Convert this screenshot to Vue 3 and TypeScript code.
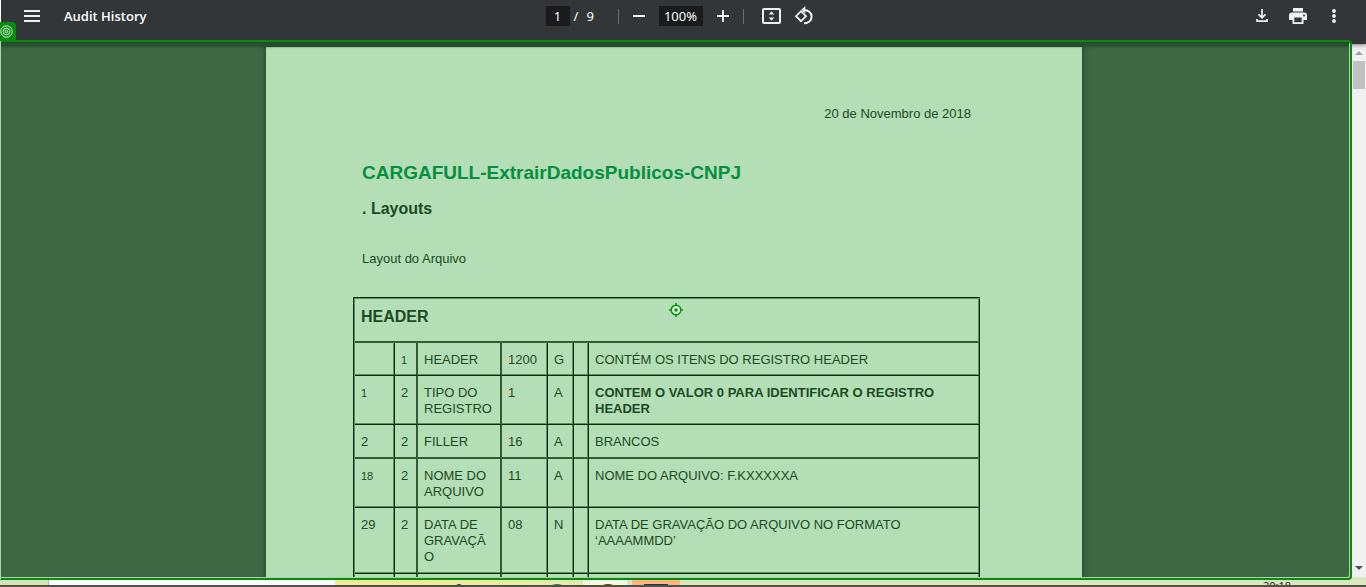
<script setup lang="ts">
import { ref } from 'vue'

interface Row {
  start: string
  level: string
  field: string
  size: string
  type: string
  note: string
  smallStart?: boolean
  smallLevel?: boolean
  strong?: boolean
  soft?: boolean
}

const page = ref('1')
const zoom = ref('100%')

const rows: Row[] = [
  { start: '', level: '1', field: 'HEADER', size: '1200', type: 'G', note: 'CONTÉM OS ITENS DO REGISTRO HEADER', smallLevel: true },
  { start: '1', level: '2', field: 'TIPO DO REGISTRO', size: '1', type: 'A', note: 'CONTEM O VALOR 0 PARA IDENTIFICAR O REGISTRO HEADER', smallStart: true, strong: true },
  { start: '2', level: '2', field: 'FILLER', size: '16', type: 'A', note: 'BRANCOS', soft: true },
  { start: '18', level: '2', field: 'NOME DO ARQUIVO', size: '11', type: 'A', note: 'NOME DO ARQUIVO: F.KXXXXXA', smallStart: true },
  { start: '29', level: '2', field: 'DATA DE GRAVAÇÃO', size: '08', type: 'N', note: 'DATA DE GRAVAÇÃO DO ARQUIVO NO FORMATO ‘AAAAMMDD’' },
  { start: '', level: '', field: '', size: '', type: '', note: '' },
]
</script>

<template>
  <div class="app">
    <header class="toolbar">
      <div class="group">
        <button class="icon-btn menu" aria-label="Menu">
          <svg width="16" height="12" viewBox="0 0 16 12"><path d="M0 1h16M0 6h16M0 11h16" stroke="#f1f1f1" stroke-width="2" /></svg>
        </button>
        <h1 class="title">Audit History</h1>
      </div>
      <div class="group center">
        <input v-model="page" class="field page-no" aria-label="Page number" />
        <span class="of">/</span><span class="total">9</span>
        <span class="sep"></span>
        <button class="icon-btn step" aria-label="Zoom out">
          <svg width="12" height="12" viewBox="0 0 12 12"><path d="M0 6h12" stroke="#f1f1f1" stroke-width="2" /></svg>
        </button>
        <input v-model="zoom" class="field zoom" aria-label="Zoom level" />
        <button class="icon-btn step" aria-label="Zoom in">
          <svg width="12" height="12" viewBox="0 0 12 12"><path d="M0 6h12M6 0v12" stroke="#f1f1f1" stroke-width="2" /></svg>
        </button>
        <span class="sep last"></span>
        <button class="icon-btn tool" aria-label="Fit to page">
          <svg width="20" height="16" viewBox="0 0 20 16">
            <rect x="1" y="1" width="17" height="14" rx="1" fill="none" stroke="#f1f1f1" stroke-width="2" />
            <path d="M9.5 3.2 12.3 6.600H6.700zM9.500 12.800 6.700 9.400h5.600z" fill="#f1f1f1" />
          </svg>
        </button>
        <button class="icon-btn tool" aria-label="Rotate">
          <svg width="20" height="20" viewBox="0 0 20 20">
            <path d="M7 5.200 12 10.200 7 15.200 2 10.200z" fill="none" stroke="#f1f1f1" stroke-width="1.800" />
            <path d="M10 4c4 0 7.600 2.600 7.600 6.700 0 3.900-3.300 6.700-7.600 6.500" fill="none" stroke="#f1f1f1" stroke-width="2" />
            <path d="M11.300 0v7.600L7.200 3.800z" fill="#f1f1f1" />
          </svg>
        </button>
      </div>
      <div class="group right">
        <button class="icon-btn wide" aria-label="Download">
          <svg width="12" height="14" viewBox="0 0 12 14">
            <path d="M6 0v8M2.500 5.300 6 8.800l3.500-3.500M1 10v2.200h10V10" fill="none" stroke="#f1f1f1" stroke-width="1.700" />
          </svg>
        </button>
        <button class="icon-btn wide" aria-label="Print">
          <svg width="18" height="16" viewBox="0 0 18 16">
            <path d="M4 0h10v3.500H4zM3 4.500h12a3 3 0 0 1 3 3V12h-3.500v4h-11v-4H0V7.500a3 3 0 0 1 3-3z" fill="#f1f1f1" />
            <path d="M5.300 9.500h7.400v4.700H5.300z" fill="#323639" /><circle cx="15" cy="7.500" r="1" fill="#323639" />
          </svg>
        </button>
        <button class="icon-btn wide" aria-label="More actions">
          <svg width="4" height="14" viewBox="0 0 4 14" fill="#f1f1f1"><circle cx="2" cy="2" r="1.900" /><circle cx="2" cy="7" r="1.900" /><circle cx="2" cy="12" r="1.900" /></svg>
        </button>
      </div>
    </header>

    <div class="body">
      <main class="viewer">
        <article class="sheet">
          <p class="date">20 de Novembro de 2018</p>
          <h2>CARGAFULL-ExtrairDadosPublicos-CNPJ</h2>
          <h3>. Layouts</h3>
          <p class="intro">Layout do Arquivo</p>
          <table>
            <colgroup>
              <col class="c-edge" /><col class="c-level" /><col class="c-field" /><col class="c-size" /><col class="c-type" /><col class="c-gap" /><col />
            </colgroup>
            <thead>
              <tr class="soft"><th colspan="7">HEADER</th></tr>
            </thead>
            <tbody>
              <tr v-for="(row, i) in rows" :key="i" :class="{ soft: row.soft }">
                <td><span :class="{ small: row.smallStart }">{{ row.start }}</span></td>
                <td><span :class="{ small: row.smallLevel }">{{ row.level }}</span></td>
                <td class="name">{{ row.field }}</td>
                <td>{{ row.size }}</td>
                <td>{{ row.type }}</td>
                <td></td>
                <td :class="{ strong: row.strong }">{{ row.note }}</td>
              </tr>
            </tbody>
          </table>
        </article>
      </main>
      <div class="scrollbar">
        <svg width="8" height="4" viewBox="0 0 8 4"><path d="M4 0 8 4H0z" fill="#a3a3a3" /></svg>
        <span class="thumb"></span>
        <svg class="down" width="8" height="4" viewBox="0 0 8 4"><path d="M4 4 0 0h8z" fill="#505050" /></svg>
      </div>
    </div>

    <footer class="taskbar">
      <span class="start"></span>
      <span class="search"></span>
      <span class="apps">
        <i class="dot navy"></i><i class="dot teal"></i>
      </span>
      <span class="pale"><i class="dot red"></i></span>
      <span class="orange"><i class="dot blue"></i></span>
      <span class="tray"><time>20:18</time></span>
    </footer>

    <div class="frame">
      <span class="badge">
        <svg width="13" height="13" viewBox="0 0 13 13" fill="none" stroke="#d9f5d9"><circle cx="6.500" cy="6.500" r="5.700" /><circle cx="6.500" cy="6.500" r="3.300" /><circle cx="6.500" cy="6.500" r="1.200" /></svg>
      </span>
      <svg class="target" width="14" height="14" viewBox="0 0 14 14">
        <circle cx="7" cy="7" r="4.800" fill="#d5f2d5" stroke="#0b920f" stroke-width="1.600" />
        <circle cx="7" cy="7" r="1.700" fill="#0b920f" />
        <path d="M7 0v2.500M7 11.500V14M0 7h2.500M11.500 7H14" stroke="#0b920f" stroke-width="1.600" />
      </svg>
    </div>
  </div>
</template>

<style>
html,
body {
  margin: 0;
  overflow: hidden;
}
</style>

<style scoped>
* {
  box-sizing: border-box;
}
.app {
  position: relative;
  display: flex;
  flex-direction: column;
  height: 100vh;
  overflow: hidden;
  font-family: "Liberation Sans", Arial, sans-serif;
}
.toolbar {
  display: grid;
  grid-template-columns: 1fr auto 1fr;
  flex: none;
  height: 44px;
  padding-right: 2px;
  padding-bottom: 12px;
  background: #323639;
  border-left: 1px solid #fff;
  color: #fff;
  font-family: "Noto Sans", "Open Sans", sans-serif;
  font-size: 13px;
  box-shadow: 0 1px 4px rgba(0, 0, 0, 0.5);
  z-index: 1;
}
.group {
  display: flex;
  align-items: center;
}
.right {
  justify-content: flex-end;
  padding-right: 12px;
}
.icon-btn {
  display: flex;
  align-items: center;
  justify-content: center;
  height: 32px;
  padding: 0;
  border: 0;
  background: none;
}
.menu {
  width: 62px;
}
.title {
  margin: 0 0 0 1px;
  font-family: "Open Sans", sans-serif;
  font-size: 13px;
  font-weight: 600;
}
.field {
  height: 20px;
  padding: 0;
  border: 0;
  background: #191b1c;
  color: #fff;
  font: inherit;
  text-align: center;
}
.page-no {
  width: 24px;
}
.of {
  width: 17px;
  padding-left: 4px;
}
.sep {
  width: 1px;
  height: 15px;
  margin-left: 24px;
  background: #6b6e70;
}
.last {
  margin: 0 12px 0 0;
}
.total {
  width: 7px;
}
.step {
  width: 40px;
}
.zoom {
  width: 44px;
}
.tool {
  width: 32px;
}
.wide {
  width: 36px;
}
.body {
  display: flex;
  flex: 1;
  min-height: 0;
}
.viewer {
  flex: 1;
  min-width: 0;
  overflow: hidden;
  padding: 3px 2px 0 0;
  background: #3d6843;
}
.sheet {
  max-width: 816px;
  margin: 0 auto;
  padding: 59px 102px 40px 87px;
  background: #b4deb5;
  box-shadow: 0 0 5px 1px #23482a;
  color: #1c4a23;
  font-size: 13px;
  line-height: 16px;
}
.sheet p,
.sheet h2,
.sheet h3 {
  margin: 0 9px;
}
.date {
  text-align: right;
}
.sheet h2 {
  margin-top: 40px;
  color: #068f41;
  font-size: 19px;
  line-height: 22px;
}
.sheet h3 {
  margin-top: 15px;
  font-size: 16px;
  line-height: 20px;
}
.sheet .intro {
  margin-top: 32px;
}
table {
  width: 100%;
  margin-top: 30px;
  table-layout: fixed;
  border-collapse: separate;
  border-spacing: 0;
  border: 1px solid #053010;
  border-width: 1px 0 0 1px;
  box-shadow: inset 1px 1px #5e8e63;
  padding: 1px 0 0 1px;
}
.c-edge {
  width: 40px;
}
.c-level {
  width: 23px;
}
.c-field {
  width: 84px;
}
.c-size {
  width: 46px;
}
.c-type {
  width: 26px;
}
.c-gap {
  width: 15px;
}
th,
td {
  --down: #5e8e63;
  --down-edge: #053010;
  --across: #5e8e63;
  --across-edge: #053010;
  padding: 9px 0 7px 6px;
  border-right: 1px solid var(--across-edge);
  border-bottom: 1px solid var(--down-edge);
  box-shadow: inset -1px 0 var(--across), inset 0 -1px var(--down);
  text-align: left;
  vertical-align: top;
}
td {
  height: 33px;
}
.soft > * {
  --down: #315d35;
  --down-edge: #315d35;
}
td:nth-child(2),
td:nth-child(3) {
  --across: #315d35;
  --across-edge: #315d35;
}
tbody .soft td {
  height: 34px;
}
tbody tr:nth-child(5) td {
  height: 66px;
}
th {
  height: 44px;
  font-size: 16px;
  line-height: 18px;
}
.name {
  padding-right: 6px;
  overflow-wrap: anywhere;
}
.strong {
  font-weight: 700;
}
.small {
  font-size: 11px;
}
.scrollbar {
  display: flex;
  flex-direction: column;
  align-items: center;
  flex: none;
  width: 16px;
  padding: 7px 0 7px 2px;
  background: #f1f1f1;
}
.thumb {
  width: 12px;
  height: 28px;
  margin-top: 6px;
  background: #c1c1c1;
}
.down {
  margin-top: auto;
}
.taskbar {
  display: flex;
  flex: none;
  height: 10px;
  overflow: hidden;
  background: #dbe8bf;
  border-bottom: 2px solid #50524a;
}
.taskbar span {
  display: flex;
  overflow: hidden;
}
.start {
  width: 49px;
  background: #d9e3b9;
  border-right: 1px solid #b5b5b5;
}
.search {
  width: 286px;
  background: #fff;
}
.apps {
  width: 248px;
  padding-left: 121px;
  gap: 88px;
  background: linear-gradient(90deg, #f0ea98 40%, #e0ecae);
}
.pale {
  width: 44px;
  margin-right: 5px;
  padding-left: 18px;
  background: #f4f9e2;
}
.orange {
  width: 48px;
  padding-left: 12px;
  background: #ffb57a;
}
.tray {
  flex: 1;
  justify-content: flex-end;
  padding-right: 75px;
}
.tray time {
  padding-top: 3px;
  color: #222;
  font-family: "Noto Sans", sans-serif;
  font-size: 11px;
  line-height: 12px;
}
.dot {
  flex: none;
  width: 6px;
  height: 6px;
  margin-top: 7px;
  border-radius: 50% 50% 0 0;
}
.navy {
  background: #123c62;
}
.teal {
  width: 14px;
  background: #237a65;
}
.red {
  width: 14px;
  background: #7b2a20;
}
.blue {
  width: 24px;
  border-radius: 0;
  background: #15395e;
}
.frame {
  position: absolute;
  z-index: 2;
  inset: 40px 14px 7px 0;
  border: 2px solid #078a0d;
  border-left: 1px solid #a9d5aa;
  border-top-right-radius: 4px;
  border-bottom-right-radius: 4px;
  box-shadow: inset -1px -1px #a9d5aa;
  background: linear-gradient(rgba(37, 78, 43, 1) 2px, rgba(37, 78, 43, 0) 6px);
  pointer-events: none;
}
.badge {
  position: absolute;
  left: -1px;
  top: -20px;
  display: flex;
  align-items: center;
  width: 16px;
  height: 19px;
  border-top-right-radius: 4px;
  background: #078a0d;
}
.target {
  position: absolute;
  left: calc(50% - 7px);
  top: calc(50% - 7px);
}
</style>
